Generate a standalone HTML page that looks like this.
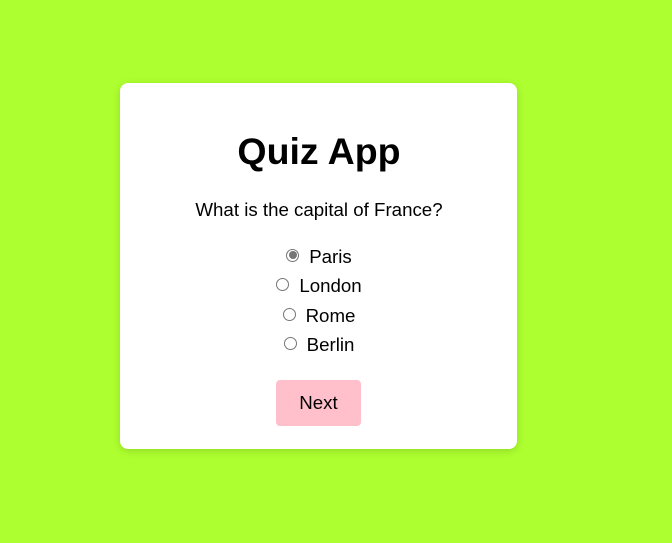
<!DOCTYPE html>
<html><head><style>
html,body{margin:0;padding:0}
body{width:672px;height:543px;background:#adff2f;font-family:"Liberation Sans",Arial,sans-serif;position:relative;overflow:hidden}
.card{position:absolute;left:120px;top:83px;width:397px;height:366px;background:#fff;border-radius:8px;box-shadow:0 2px 8px rgba(0,0,0,0.15)}
.t{position:absolute;left:0;width:672px;text-align:center;color:#000}
h1{margin:0;font-size:37.5px;font-weight:bold}
.opt{font-size:18.7px;line-height:22px}
.r{display:inline-block;width:11px;height:11px;border:1px solid #767676;border-radius:50%;vertical-align:middle;margin-right:10px;position:relative;top:-3px;box-sizing:content-box}
.r.c::after{content:"";position:absolute;left:1.5px;top:1.5px;width:8px;height:8px;border-radius:50%;background:#767676}
.btn{position:absolute;left:276px;top:380px;width:85px;height:46px;background:#ffc0cb;border-radius:4px;font-size:18.7px;line-height:46px;text-align:center;color:#000}
</style></head><body>
<div class="card"></div>
<div class="t" style="top:130px;left:-17px"><h1>Quiz App</h1></div>
<div class="t opt" style="top:199px;left:-17px">What is the capital of France?</div>
<div class="t opt" style="top:246px;left:-17px"><span class="r c"></span>Paris</div>
<div class="t opt" style="top:275px;left:-17px"><span class="r"></span>London</div>
<div class="t opt" style="top:305px;left:-17px"><span class="r"></span>Rome</div>
<div class="t opt" style="top:334px;left:-17px"><span class="r"></span>Berlin</div>
<div class="btn">Next</div>
</body></html>
